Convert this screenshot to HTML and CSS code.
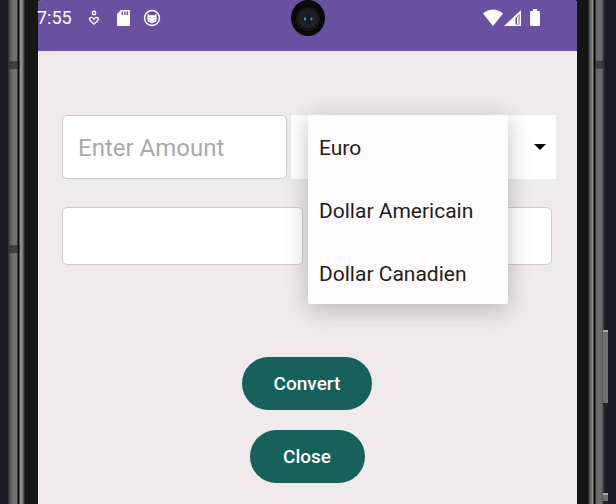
FILE: index.html
```html
<!DOCTYPE html>
<html lang="en">
<head>
<meta charset="utf-8">
<meta name="viewport" content="width=device-width, initial-scale=1">
<title>Currency converter</title>
<link rel="stylesheet" href="styles.css">
</head>
<body>
<div class="phone">
  <div class="edge edge-left">
    <span class="band band-top"></span>
    <span class="band band-bottom"></span>
  </div>
  <div class="screen">
    <header class="status">
      <div class="status-group">
        <span class="clock">7:55</span>
        <svg class="icon" viewBox="0 0 18 18" fill="none" stroke="#fff" stroke-width="1.4"><circle cx="9" cy="4" r="1.700"/><path d="M9 15 5.300 11.600C3.800 10 4.900 8.300 6.600 8.400 7.800 8.500 8.300 9.300 9 10.200 9.700 9.300 10.200 8.500 11.400 8.400 13.100 8.300 14.200 10 12.700 11.600Z"/></svg>
        <svg class="icon" viewBox="0 0 18 18"><path fill="#fff" d="M7 1h8q1 0 1 1v14q0 1-1 1H4q-1 0-1-1V5Z"/><path stroke="#6950a1" stroke-width="1.400" d="M8.300 2.500v3.500M10.800 2.500v3.500M13.300 2.500v3.500"/></svg>
        <svg class="icon" viewBox="0 0 18 18"><circle cx="9" cy="9" r="7.500" fill="none" stroke="#fff" stroke-width="1.400"/><path fill="#fff" d="M4.500 4.500 6.500 6.300h5L13.500 4.500V8l.5 1-1 3.500-4 1.700-4-1.700L4 9l.5-1Z"/><path stroke="#6950a1" stroke-width=".5" d="M6.500 8.500h1M10.500 8.500h1M6 11.500h1M8.500 12h1M11 11.500h1"/></svg>
      </div>
      <div class="status-group signals">
        <svg class="wifi" viewBox="0 0 20 18"><path fill="#fff" d="M0 4.500Q10-3.500 20 4.500L10 17Z"/></svg>
        <svg class="cell" viewBox="0 0 18 18"><path fill="#fff" fill-rule="evenodd" d="M17 1v16H0ZM15.500 5 11.500 9v6.500h4Z"/><path fill="#fff" d="M13 8.500 14.600 6.500V15H13Z"/></svg>
        <svg class="battery" viewBox="0 0 10 18"><path fill="#fff" d="M3 0h4v2h2q1 0 1 1v13q0 1-1 1H1q-1 0-1-1V3q0-1 1-1h2Z"/></svg>
      </div>
      <svg class="camera" viewBox="0 0 34 36"><ellipse cx="17" cy="18" rx="17" ry="18" fill="#080809"/><circle cx="17" cy="19" r="12" fill="#171719"/><circle cx="17" cy="19" r="9.500" fill="#202125"/><circle cx="17" cy="19" r="5" fill="#131b25"/><ellipse cx="14" cy="19" rx="1" ry="1.700" fill="#6d94ac"/><ellipse cx="20.500" cy="19" rx="1" ry="1.700" fill="#6579a0"/></svg>
    </header>
    <main class="content">
      <div class="row">
        <input class="field amount" type="text" placeholder="Enter Amount" aria-label="Amount">
        <div class="spinner">
          <select class="spinner-select" aria-label="Currency">
            <option>Euro</option>
            <option>Dollar Americain</option>
            <option>Dollar Canadien</option>
          </select>
          <svg class="arrow" viewBox="0 0 12 6"><path d="M0 0h12L6 6Z"/></svg>
          <div class="menu" role="listbox" aria-label="Currency choices">
            <button class="choice" type="button" role="option" aria-selected="true">Euro</button>
            <button class="choice" type="button" role="option">Dollar Americain</button>
            <button class="choice" type="button" role="option">Dollar Canadien</button>
          </div>
        </div>
      </div>
      <div class="row results">
        <input class="field result" type="text" aria-label="Result">
        <input class="field result" type="text" aria-label="Result currency">
      </div>
      <div class="actions">
        <button class="action" type="button">Convert</button>
        <button class="action" type="button">Close</button>
      </div>
    </main>
  </div>
  <div class="edge edge-right">
    <span class="band band-top"></span>
    <span class="key key-power"></span>
    <span class="key key-volume"></span>
  </div>
</div>
</body>
</html>
```
FILE: styles.css
```css
* {
  box-sizing: border-box;
}

body {
  margin: 0;
  background: #141414;
  font-family: Roboto, "Liberation Sans", sans-serif;
}

button,
input,
select {
  font-family: inherit;
  margin: 0;
}

.phone {
  display: grid;
  grid-template-columns: 38px minmax(0, 1fr) 39px;
  min-height: 100vh;
  overflow: hidden;
}

.edge {
  position: relative;
}

.edge-left {
  background: linear-gradient(90deg,
    #1a1a25 0 8px, #484848 9px, #606060 11px, #707070 14px, #747474 17px,
    #080808 18px 19px, #909090 20px, #8c8c8c 22px, #606060 23px, #444 24px,
    #151515 25px 38px);
}

.edge-right {
  background: linear-gradient(90deg,
    #141414 0 11px, #444 12px, #666 13px, #606060 14px, #8c8c8c 15px 16px,
    #080808 17px 18px, #666 19px, #707070 22px, #666 25px, #292a2d 27px,
    #1a1b24 28px 39px);
}

.band {
  position: absolute;
  height: 8px;
  background: #222;
  opacity: 0.6;
}

.edge-left .band {
  left: 9px;
  width: 9px;
}

.edge-right .band {
  left: 18px;
  width: 8px;
}

.band-top {
  top: 61px;
}

.band-bottom {
  top: 245px;
}

.key {
  position: absolute;
  left: 26px;
  width: 5px;
  background: #707070;
  border-top: 2px solid #aaa;
  border-bottom: 3px solid #222;
}

.key-power {
  top: 330px;
  height: 76px;
}

.key-volume {
  top: 493px;
  bottom: 0;
}

.screen {
  min-width: 0;
  background: #f0eaec;
  border-radius: 4px 4px 0 0;
}

.status {
  position: relative;
  display: flex;
  justify-content: space-between;
  align-items: flex-start;
  height: 51px;
  padding: 8px 37px 0 0;
  background: #6950a1;
  border-radius: 4px 4px 0 0;
}

.status-group {
  display: flex;
  align-items: center;
  gap: 11px;
  height: 20px;
}

.clock {
  margin: 0 2px 0 -1px;
  color: #fff;
  font-size: 18px;
  line-height: 20px;
}

.icon {
  width: 18px;
  height: 18px;
}

.signals {
  gap: 1px;
}

.wifi {
  width: 20px;
  height: 18px;
}

.cell {
  width: 18px;
  height: 18px;
}

.battery {
  width: 10px;
  height: 18px;
  margin-left: 7px;
}

.camera {
  position: absolute;
  top: 0;
  left: 50%;
  width: 34px;
  height: 36px;
  transform: translateX(-50%);
}

.content {
  padding: 64px 21px 20px 24px;
}

.row {
  display: grid;
  grid-template-columns: 225fr 265fr;
  gap: 4px;
}

.field {
  min-width: 0;
  padding: 2px 15px 0;
  border: 1px solid #d0c8cb;
  border-radius: 5px;
  background: #fff;
  color: #1d1b20;
  font-size: 24px;
}

.field::placeholder {
  color: #aaa;
  opacity: 1;
}

.amount {
  height: 64px;
}

.spinner {
  position: relative;
  display: flex;
  align-items: center;
  min-width: 0;
}

.spinner-select {
  width: 100%;
  height: 64px;
  padding: 0 28px;
  border: 0;
  border-radius: 0;
  background: #fff;
  color: #1d1b20;
  font-size: 21px;
  appearance: none;
}

.arrow {
  position: absolute;
  right: 10px;
  width: 12px;
  height: 6px;
  pointer-events: none;
}

.menu {
  position: absolute;
  z-index: 1;
  top: 0;
  left: 17px;
  width: 200px;
  background: #fffbff;
  border-radius: 2px;
  box-shadow: 0 8px 22px rgba(60, 40, 50, 0.18), 0 0 24px rgba(60, 40, 50, 0.12);
}

.choice {
  display: block;
  width: 100%;
  height: 63px;
  padding: 2px 11px 0;
  border: 0;
  background: none;
  color: #1d1b20;
  font-size: 21px;
  text-align: left;
}

.results {
  grid-template-columns: 241fr 244fr;
  gap: 5px;
  margin: 28px 4px 92px 0;
}

.result {
  height: 58px;
}

.actions {
  display: flex;
  flex-direction: column;
  align-items: center;
  gap: 20px;
  margin-right: 4px;
}

.action {
  min-width: 115px;
  height: 53px;
  padding: 0 32px;
  border: 0;
  border-radius: 27px;
  background: #17615a;
  color: #fff;
  font-size: 19px;
  font-weight: 500;
}
```
